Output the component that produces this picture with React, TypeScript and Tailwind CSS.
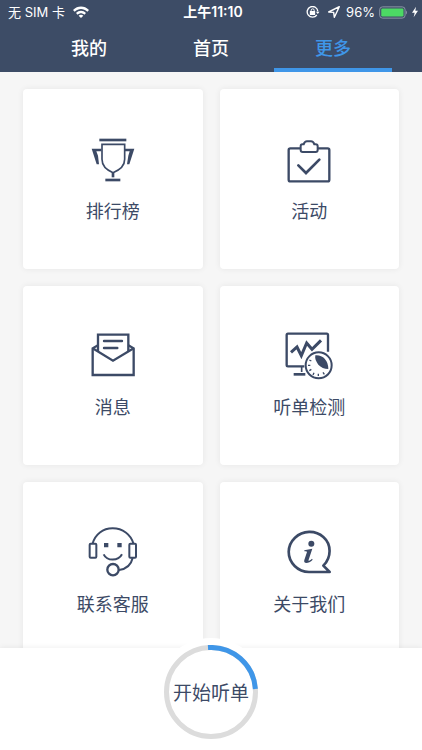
import type { ReactNode } from "react";

const tabs = [
  { label: "我的", active: false },
  { label: "首页", active: false },
  { label: "更多", active: true },
];

function Icon({ viewBox, children }: { viewBox: string; children: ReactNode }) {
  return (
    <svg
      viewBox={viewBox}
      className="size-12 overflow-visible"
      fill="none"
      stroke="currentColor"
      strokeWidth={7}
      aria-hidden="true"
    >
      {children}
    </svg>
  );
}

function TrophyIcon() {
  return (
    <Icon viewBox="26 18 144 144">
      <path d="M57 30H138" strokeWidth={8} />
      <path d="M65 43H133V88C133 108 119 120 98 128C78 120 65 108 65 88Z" strokeWidth={5} />
      <path d="M98 128V142" strokeWidth={8} />
      <path d="M75 150H120" strokeWidth={8} />
      <path
        d="M63 56H34L49 103H56L53 77L48 64H63ZM134 56H162L147 103H140L144 77L148 64H134Z"
        fill="currentColor"
        stroke="none"
      />
    </Icon>
  );
}

function ClipboardIcon() {
  return (
    <Icon viewBox="28 18 144 144">
      <path
        d="M75 55H44Q39 55 39 60V149Q39 154 44 154H156Q161 154 161 149V60Q161 55 156 55H126"
        strokeLinejoin="round"
      />
      <path
        d="M80 43H84C86 37 89 34 94 34H106C111 34 114 37 116 43H120Q126 43 126 49V60Q126 66 120 66H81Q75 66 75 60V49Q75 43 80 43Z"
        strokeWidth={6}
      />
      <path d="M68 106L91 129L131 89" strokeWidth={8} strokeLinecap="round" />
    </Icon>
  );
}

function MailIcon() {
  return (
    <Icon viewBox="26 22 144 144">
      <path d="M53 79V30H144V79" />
      <path d="M53 62L37 71V151H160V71L144 62" />
      <path d="M37 71L98 108L160 71" />
      <path d="M71 49H125M71 70H111" strokeLinecap="round" />
    </Icon>
  );
}

function MonitorIcon() {
  return (
    <Icon viewBox="28 22 144 144">
      <path d="M86 125H37Q33 125 33 121V31Q33 27 37 27H153Q157 27 157 31V81" />
      <path d="M46 83L64 67L77 93L93 55L109 74L136 47" strokeWidth={9} />
      <path d="M78 126V142" strokeWidth={5} />
      <path d="M54 149H89" strokeWidth={8} />
      <circle cx="129" cy="122" r="39" strokeWidth={6} />
      <path
        d="M119 92C140 90 158 106 158 133C146 133 136 128 128 120C121 111 117 102 119 92Z"
        fill="currentColor"
        stroke="none"
      />
      <path
        d="M97 122H104M101 106L107 109M101 138L107 134M112 151L115 144M128 154V147M146 149L142 143"
        strokeWidth={4}
      />
    </Icon>
  );
}

function SupportIcon() {
  return (
    <Icon viewBox="26 27 144 144">
      <path d="M37 70C45 43 67 25 97 25S151 43 159 70" strokeWidth={6} />
      <rect x="28" y="71" width="20" height="42" rx="3" strokeWidth={6} />
      <rect x="147" y="71" width="20" height="42" rx="3" strokeWidth={6} />
      <path d="M71 69H84V82H71ZM111 69H124V82H111Z" fill="currentColor" stroke="none" />
      <path d="M70 103C80 124 114 124 125 103" strokeWidth={6} />
      <circle cx="98" cy="149" r="17" />
      <path d="M157 114C152 136 139 147 116 150" strokeWidth={6} />
    </Icon>
  );
}

function InfoIcon() {
  return (
    <Icon viewBox="28 27 144 144">
      <path
        d="M143 137C168 112 168 73 143 51C119 29 81 31 58 53C33 77 33 114 57 138C69 150 83 156 100 156H162Z"
        strokeWidth={8}
        strokeLinejoin="round"
      />
      <circle cx="107" cy="71" r="9" fill="currentColor" stroke="none" />
      <path
        d="M86 91L110 86L99 119C97 125 101 123 109 116L111 119C100 131 82 133 86 120L94 96Q94 93 86 94Z"
        fill="currentColor"
        stroke="none"
      />
    </Icon>
  );
}

const cards = [
  { label: "排行榜", icon: <TrophyIcon /> },
  { label: "活动", icon: <ClipboardIcon /> },
  { label: "消息", icon: <MailIcon /> },
  { label: "听单检测", icon: <MonitorIcon /> },
  { label: "联系客服", icon: <SupportIcon /> },
  { label: "关于我们", icon: <InfoIcon /> },
];

function StatusBar() {
  return (
    <div className="grid h-6 grid-cols-[1fr_auto_1fr] items-center pr-1 pl-2 text-sm">
      <div className="flex items-center gap-2 text-[13px]">
        <span>无 SIM 卡</span>
        <svg viewBox="0 0 48 34" className="h-3 w-4" fill="currentColor" aria-hidden="true">
          <path d="M0 11C14-3 34-3 48 11L43 16C31 5 17 5 5 16Z" />
          <path d="M9 20C18 11 30 11 39 20L34 25C28 19 20 19 14 25Z" />
          <path d="M17 28C21 24 27 24 31 28L24 35Z" />
        </svg>
      </div>
      <span className="font-semibold">上午11:10</span>
      <div className="flex items-center justify-end gap-1 text-[13px]">
        <svg viewBox="0 0 39 36" className="mr-1 h-3 w-3.5" fill="none" stroke="currentColor" aria-hidden="true">
          <path d="M31 27A16 16 0 1 1 34 16" strokeWidth="4" />
          <path d="M28 17H39L34 24Z" fill="currentColor" stroke="none" />
          <rect x="10" y="15" width="16" height="12" rx="1" fill="currentColor" stroke="none" />
          <path d="M14 17V13A4 4 0 0 1 23 13V17" strokeWidth="3" />
        </svg>
        <svg viewBox="0 0 34 34" className="mr-0.5 size-3" fill="none" stroke="currentColor" strokeWidth="4" strokeLinejoin="round" aria-hidden="true">
          <path d="M2 17L32 2L18 32L16 18Z" />
        </svg>
        <span>96%</span>
        <svg viewBox="0 0 90 39" className="h-[13px] w-[29px]" aria-hidden="true">
          <rect x="2" y="2" width="79" height="35" rx="9" fill="none" stroke="#8d97a8" strokeWidth="3" />
          <rect x="7" y="7" width="69" height="25" rx="4" fill="#4cd964" />
          <path d="M84 13Q90 19 84 26Z" fill="#8d97a8" />
        </svg>
        <svg viewBox="0 0 18 32" className="h-3 w-1.5" fill="currentColor" aria-hidden="true">
          <path d="M12 0L0 18H8L5 32L18 12H10Z" />
        </svg>
      </div>
    </div>
  );
}

export default function App() {
  return (
    <div className="flex h-screen flex-col overflow-hidden bg-[#f6f6f6] font-['Inter','Noto_Sans_CJK_SC',sans-serif] text-[#3c4a66]">
      <header className="shrink-0 bg-[#3d4c66] text-white">
        <StatusBar />
        <nav className="grid h-12 grid-cols-3 px-7">
          {tabs.map((tab) => (
            <button
              key={tab.label}
              type="button"
              aria-current={tab.active ? "page" : undefined}
              className={
                tab.active
                  ? "mx-0.5 border-b-4 border-[#3f96e8] pt-1.5 text-lg font-medium text-[#3f96e8]"
                  : "mx-0.5 border-b-4 border-transparent pt-1.5 text-lg font-medium"
              }
            >
              {tab.label}
            </button>
          ))}
        </nav>
      </header>

      <main className="min-h-0 flex-1 overflow-hidden">
        <div className="grid grid-cols-2 gap-[17px] px-[23px] py-[17px]">
          {cards.map((card) => (
            <button
              key={card.label}
              type="button"
              className="flex aspect-square flex-col items-center justify-center gap-4 rounded-sm bg-white pt-0.5 shadow-[0_0_6px_rgba(0,0,0,0.07)]"
            >
              {card.icon}
              <span className="text-lg leading-6">{card.label}</span>
            </button>
          ))}
        </div>
      </main>

      <footer className="relative flex h-[102px] shrink-0 justify-center bg-white shadow-[0_0_6px_rgba(0,0,0,0.08)]">
        <button
          type="button"
          className="-mt-2.5 grid size-[108px] place-items-center rounded-full bg-white text-[19px]"
        >
          <svg viewBox="0 0 94 94" className="col-start-1 row-start-1 size-[94px]" fill="none" strokeWidth="5" aria-hidden="true">
            <circle cx="47" cy="47" r="44.5" stroke="#dcdcdc" />
            <path d="M44 2.6A44.5 44.5 0 0 1 91.4 44" stroke="#3f96e8" />
          </svg>
          <span className="col-start-1 row-start-1 pt-1">开始听单</span>
        </button>
      </footer>
    </div>
  );
}
